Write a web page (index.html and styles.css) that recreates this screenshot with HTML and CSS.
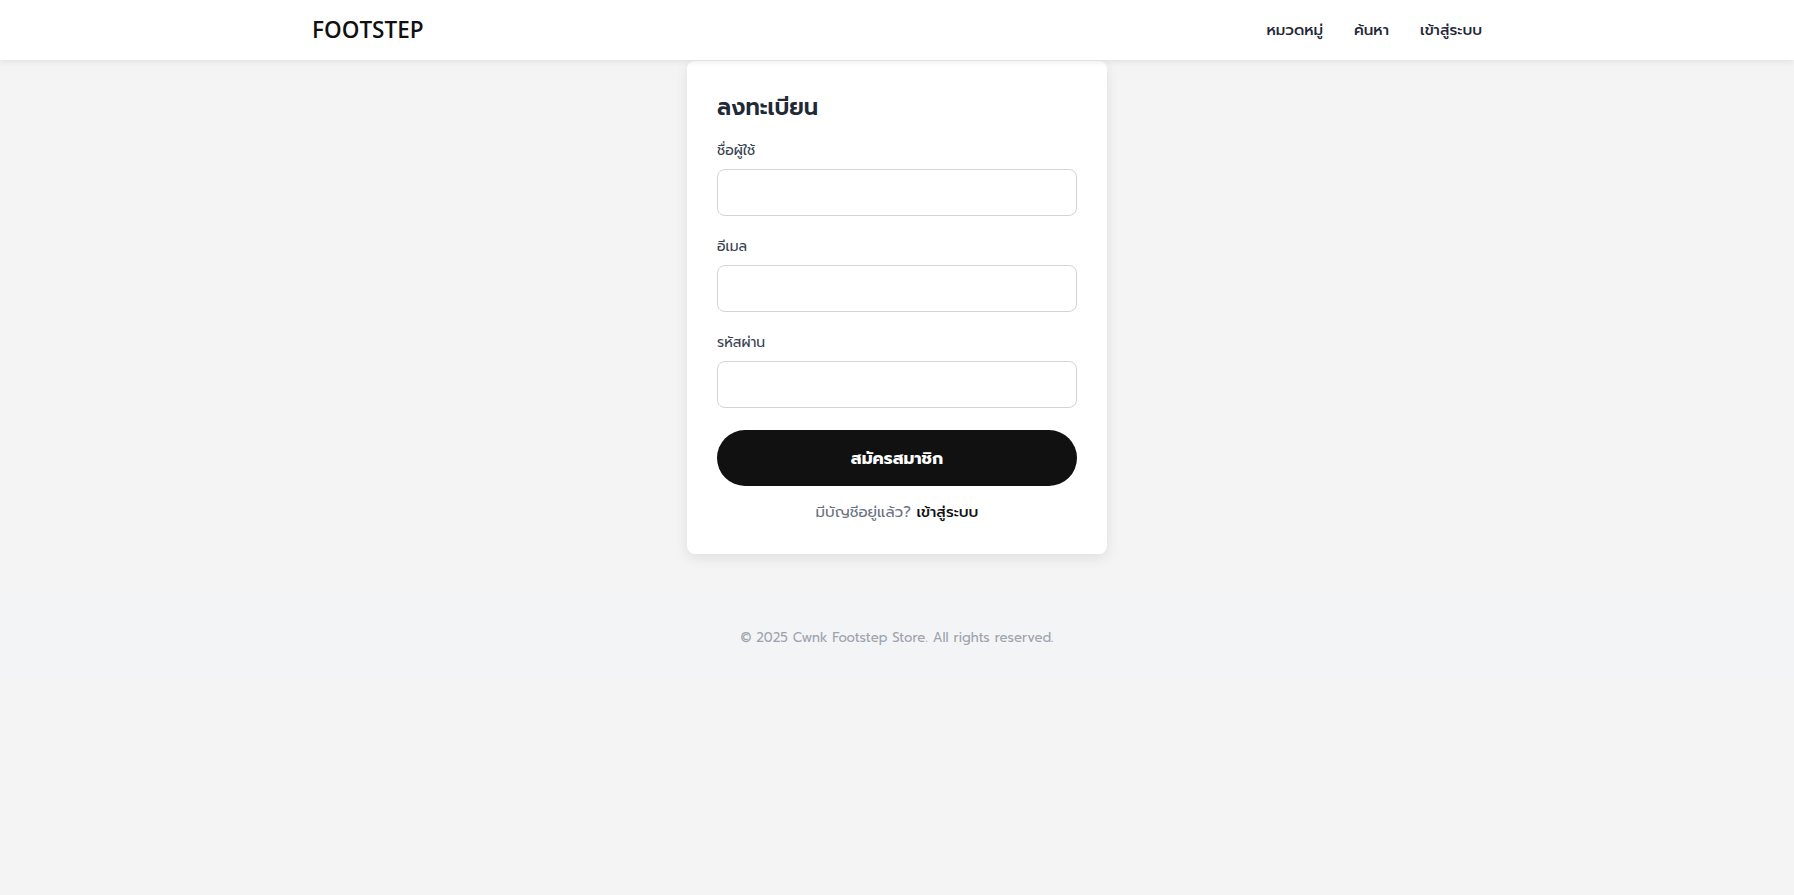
FILE: index.html
```html
<!DOCTYPE html>
<html lang="th">
<head>
<meta charset="utf-8">
<title>ลงทะเบียน - FOOTSTEP</title>
<link rel="stylesheet" href="styles.css">
</head>
<body>
<header class="site-header">
  <div class="header-inner">
    <a class="brand" href="#">FOOTSTEP</a>
    <nav class="nav">
      <a class="nav-link" href="#">หมวดหมู่</a>
      <a class="nav-link" href="#">ค้นหา</a>
      <a class="nav-link" href="#">เข้าสู่ระบบ</a>
    </nav>
  </div>
</header>
<main class="main">
  <div class="card">
    <h1 class="card-title">ลงทะเบียน</h1>
    <form class="form">
      <div class="field">
        <label class="label" for="username">ชื่อผู้ใช้</label>
        <input class="input" id="username" type="text">
      </div>
      <div class="field">
        <label class="label" for="email">อีเมล</label>
        <input class="input" id="email" type="email">
      </div>
      <div class="field field-last">
        <label class="label" for="password">รหัสผ่าน</label>
        <input class="input" id="password" type="password">
      </div>
      <button class="btn" type="button">สมัครสมาชิก</button>
    </form>
    <p class="switch">มีบัญชีอยู่แล้ว? <a class="switch-link" href="#">เข้าสู่ระบบ</a></p>
  </div>
</main>
<footer class="footer">
  <p class="footer-text">© 2025 Cwnk Footstep Store. All rights reserved.</p>
</footer>
</body>
</html>
```
FILE: styles.css
```css
* { box-sizing: border-box; }
html, body { margin: 0; padding: 0; }
body {
  background: #f4f4f5;
  font-family: "Prompt", "Kanit", "Noto Sans Thai", "Noto Sans", "DejaVu Sans", sans-serif;
  color: #111827;
}
a { text-decoration: none; color: inherit; }

.site-header {
  background: #ffffff;
  height: 60px;
  box-shadow: 0 2px 6px rgba(0, 0, 0, 0.08);
  position: relative;
  z-index: 2;
}
.header-inner {
  max-width: 1170px;
  height: 100%;
  margin: 0 auto;
  display: flex;
  align-items: center;
  justify-content: space-between;
}
.brand {
  font-family: "Open Sans", "Noto Sans", sans-serif;
  font-size: 22.5px;
  font-weight: 600;
  color: #111111;
  margin-top: -2px;
}
.nav { display: flex; gap: 31px; }
.nav-link {
  font-size: 15px;
  font-weight: 500;
  color: #1f2937;
}

.main {
  padding: 1px 0 38px;
  display: flex;
  justify-content: center;
}
.card {
  width: 420px;
  background: #ffffff;
  border-radius: 8px;
  box-shadow: 0 4px 14px rgba(0, 0, 0, 0.09);
  padding: 30px 30px 30px;
}
.card-title {
  margin: 0 0 18px;
  font-size: 22.5px;
  line-height: 32px;
  font-weight: 600;
  color: #1f2937;
}
.form { display: flex; flex-direction: column; }
.field { display: flex; flex-direction: column; margin-bottom: 21px; }
.field-last { margin-bottom: 22px; }
.label {
  font-size: 14px;
  line-height: 20px;
  font-weight: 400;
  color: #374151;
  margin-bottom: 8px;
}
.input {
  height: 47px;
  border: 1px solid #d1d5db;
  border-radius: 8px;
  background: #ffffff;
  padding: 0 14px;
  font-size: 16px;
  font-family: inherit;
  outline: none;
}
.btn {
  height: 56px;
  border: 0;
  border-radius: 999px;
  background: #111111;
  color: #ffffff;
  font-family: inherit;
  font-size: 17px;
  font-weight: 700;
  cursor: pointer;
}
.switch {
  margin: 14px 0 0;
  text-align: center;
  font-size: 15px;
  line-height: 24px;
  color: #6b7280;
}
.switch-link { color: #111111; font-weight: 500; }

.footer {
  background: #f3f4f6;
  padding: 34px 0 30px;
}
.footer-text {
  margin: 0;
  text-align: center;
  font-size: 13.2px;
  line-height: 24px;
  color: #9ca3af;
}
```
